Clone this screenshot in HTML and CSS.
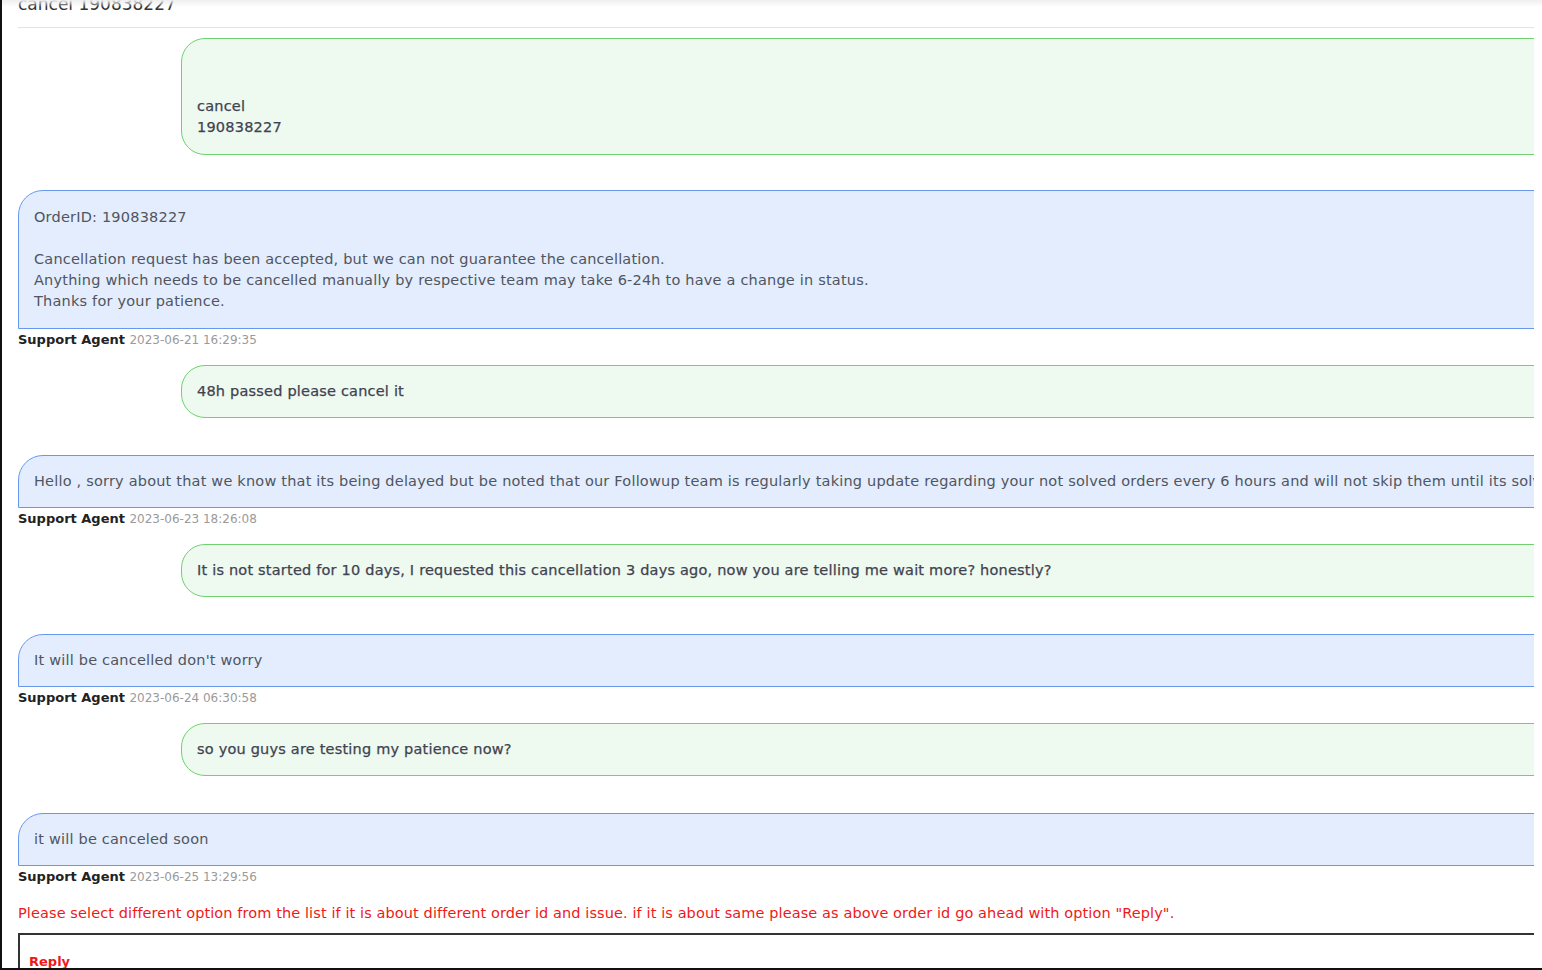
FILE: index.html
```html
<!DOCTYPE html>
<html lang="en">
<head>
<meta charset="utf-8">
<title>cancel 190838227</title>
<link rel="stylesheet" href="styles.css">
</head>
<body>
<div class="frame">
  <div class="top-shade"></div>
  <div class="content">
    <h2 class="title">cancel 190838227</h2>
    <div class="thread">
      <div class="msg user first">
        <div class="bubble"><br><br>cancel<br>190838227</div>
      </div>
      <div class="msg agent first">
        <div class="bubble">OrderID: 190838227<br><br>Cancellation request has been accepted, but we can not guarantee the cancellation.<br>Anything which needs to be cancelled manually by respective team may take 6-24h to have a change in status.<br>Thanks for your patience.</div>
        <div class="meta"><span class="who">Support Agent</span> <span class="when">2023-06-21 16:29:35</span></div>
      </div>
      <div class="msg user">
        <div class="bubble">48h passed please cancel it</div>
      </div>
      <div class="msg agent">
        <div class="bubble">Hello , sorry about that we know that its being delayed but be noted that our Followup team is regularly taking update regarding your not solved orders every 6 hours and will not skip them until its solved.</div>
        <div class="meta"><span class="who">Support Agent</span> <span class="when">2023-06-23 18:26:08</span></div>
      </div>
      <div class="msg user">
        <div class="bubble">It is not started for 10 days, I requested this cancellation 3 days ago, now you are telling me wait more? honestly?</div>
      </div>
      <div class="msg agent">
        <div class="bubble">It will be cancelled don't worry</div>
        <div class="meta"><span class="who">Support Agent</span> <span class="when">2023-06-24 06:30:58</span></div>
      </div>
      <div class="msg user">
        <div class="bubble">so you guys are testing my patience now?</div>
      </div>
      <div class="msg agent">
        <div class="bubble">it will be canceled soon</div>
        <div class="meta"><span class="who">Support Agent</span> <span class="when">2023-06-25 13:29:56</span></div>
      </div>
    </div>
    <p class="notice">Please select different option from the list if it is about different order id and issue. if it is about same please as above order id go ahead with option "Reply".</p>
    <div class="reply">
      <span class="reply-label">Reply</span>
    </div>
  </div>
</div>
</body>
</html>
```

FILE: styles.css
```css
html, body {
  margin: 0;
  padding: 0;
  background: #ffffff;
}

body {
  font-family: "DejaVu Sans", "Inter", sans-serif;
  font-size: 14px;
  color: #50555f;
}

.frame {
  position: relative;
  height: 968px;
  border-left: 2px solid #111;
  border-bottom: 2px solid #111;
  overflow: hidden;
  background: #fff;
}

.top-shade {
  position: absolute;
  top: 0;
  left: 0;
  right: 0;
  height: 7px;
  background: linear-gradient(#efefef, rgba(255, 255, 255, 0));
  pointer-events: none;
}

.content {
  margin-left: 16px;
  margin-right: 8px;
  overflow: hidden;
  height: 100%;
}

.title {
  margin: -7px 0 0 0;
  font-size: 17px;
  line-height: 22px;
  font-weight: 400;
  color: #333;
  padding-bottom: 12px;
  border-bottom: 1px solid #e3e3e3;
}

.thread {
  margin-right: -300px;
  display: flex;
  flex-direction: column;
}

.msg.user {
  margin-left: 163px;
  margin-top: 15px;
  margin-bottom: 37px;
}

.msg.user.first {
  margin-top: 10px;
  margin-bottom: 35px;
}

.bubble {
  padding: 15px;
  font-size: 14.5px;
  letter-spacing: 0.2px;
  line-height: 21px;
  white-space: nowrap;
}

.user .bubble {
  background: #eef9ef;
  border: 1px solid #6fd26f;
  border-radius: 24px 0 0 24px;
  color: #3f4350;
  -webkit-text-stroke: 0.25px #3f4350;
}

.user.first .bubble {
  padding-bottom: 16px;
}

.agent .bubble {
  background: #e3edfd;
  border: 1px solid #6898ee;
  border-radius: 25px 0 0 0;
}

.agent.first .bubble {
  padding-top: 16px;
  padding-bottom: 16px;
}

.meta {
  line-height: 20px;
}

.who {
  font-weight: 700;
  color: #222;
  font-size: 13px;
}

.when {
  font-size: 12px;
  color: #9a9a9a;
}

.notice {
  margin: 16px 0 9px 0;
  color: #f01818;
  font-size: 14.5px;
  letter-spacing: 0.1px;
  line-height: 21px;
}

.reply {
  border-top: 2px solid #333;
  border-left: 2px solid #333;
  margin-right: -20px;
  padding: 17px 9px 0;
  height: 60px;
}

.reply-label {
  color: #f01818;
  font-weight: 700;
  font-size: 13px;
  line-height: 20px;
}
```
